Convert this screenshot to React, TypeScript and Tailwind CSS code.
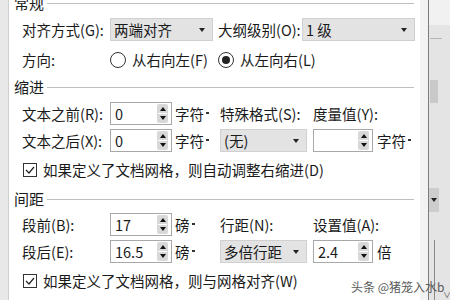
import React from "react";

const FONT = { fontFamily: '"Noto Sans CJK SC", "Noto Sans", sans-serif' };

function Heading({ text, className = "" }: { text: string; className?: string }) {
  return (
    <div className={`flex items-center h-[20px] pl-[5px] pr-[6px] ${className}`}>
      <span className="text-[15px] leading-[20px] text-[#1a1a1a]">{text}</span>
      <div className="flex-1 h-px bg-[#bdbdbd] ml-[3px]" />
    </div>
  );
}

function Label({ text, w }: { text: string; w: string }) {
  return <span className={`${w} shrink-0 whitespace-nowrap text-[14.5px] leading-[20px] text-[#1a1a1a]`}>{text}</span>;
}

function Caret() {
  return <span className="inline-block w-0 h-0 border-l-[3px] border-r-[3px] border-t-[4px] border-l-transparent border-r-transparent border-t-[#222]" />;
}

function Select({ value, w }: { value: string; w: string }) {
  return (
    <div className={`${w} h-[23px] shrink-0 flex items-center justify-between bg-[#e3e3e3] border border-[#d0d0d0] pl-[3px] pr-[7px]`}>
      <span className="text-[14.5px] leading-[20px] text-[#1a1a1a] whitespace-nowrap">{value}</span>
      <Caret />
    </div>
  );
}

function Spin({ value, w }: { value: string; w: string }) {
  return (
    <div className={`${w} h-[23px] shrink-0 flex items-center justify-between bg-white border border-[#a8a8a8] pl-[4px] pr-[3px]`}>
      <span className="text-[14.5px] leading-[20px] text-[#1a1a1a]">{value}</span>
      <div className="w-[11px] h-[19px] bg-[#d8d8d8] rounded-[2px] flex flex-col items-center justify-around py-[2px]">
        <span className="w-0 h-0 border-l-[3px] border-r-[3px] border-b-[4px] border-l-transparent border-r-transparent border-b-[#111]" />
        <span className="w-[9px] h-px bg-white" />
        <span className="w-0 h-0 border-l-[3px] border-r-[3px] border-t-[4px] border-l-transparent border-r-transparent border-t-[#111]" />
      </div>
    </div>
  );
}

function Unit({ text, w, dot = true }: { text: string; w: string; dot?: boolean }) {
  return (
    <span className={`${w} shrink-0 flex items-center text-[14.5px] leading-[20px] text-[#1a1a1a]`}>
      {text}
      {dot && <span className="ml-[2px] mt-[-2px] w-[3px] h-[2px] bg-[#333]" />}
    </span>
  );
}

function Check({ text, className = "" }: { text: string; className?: string }) {
  return (
    <div className={`flex items-center h-[20px] pl-[14px] ${className}`}>
      <span className="w-[14px] h-[14px] border border-[#333] bg-white flex items-center justify-center">
        <svg width="10" height="8" viewBox="0 0 10 8">
          <path d="M1 4 L4 7 L9 1" fill="none" stroke="#222" strokeWidth="1.2" />
        </svg>
      </span>
      <span className="ml-[6px] text-[14.5px] leading-[20px] text-[#1a1a1a] whitespace-nowrap">{text}</span>
    </div>
  );
}

function Radio({ on }: { on?: boolean }) {
  return (
    <span className="w-[16px] h-[16px] shrink-0 rounded-full border border-[#333] bg-white flex items-center justify-center">
      {on && <span className="w-[8px] h-[8px] rounded-full bg-[#222]" />}
    </span>
  );
}

export default function App() {
  return (
    <div className="relative w-[450px] h-[300px] flex overflow-hidden bg-white" style={FONT}>
      {/* background window, left */}
      <div className="w-[9px] shrink-0 bg-[#e8e8e8] border-r border-[#cfcfcf]" />

      {/* paragraph dialog */}
      <div className="w-[411px] shrink-0 bg-white">
        <Heading text="常规" className="mt-[-7px]" />

        <div className="flex items-center pl-[13px] mt-[5px]">
          <Label text="对齐方式(G):" w="w-[88px]" />
          <Select value="两端对齐" w="w-[103px]" />
          <span className="ml-[5px]" />
          <Label text="大纲级别(O):" w="w-[84px]" />
          <Select value="1 级" w="w-[113px]" />
        </div>

        <div className="flex items-center pl-[13px] mt-[9px] h-[20px]">
          <Label text="方向:" w="w-[88px]" />
          <div className="w-[108px] shrink-0 flex items-center">
            <Radio />
            <span className="ml-[6px] text-[14.5px] leading-[20px] text-[#1a1a1a] whitespace-nowrap">从右向左(F)</span>
          </div>
          <Radio on />
          <span className="ml-[6px] text-[14.5px] leading-[20px] text-[#1a1a1a] whitespace-nowrap">从左向右(L)</span>
        </div>

        <Heading text="缩进" className="mt-[7px]" />

        <div className="flex items-center pl-[13px] mt-[5px]">
          <Label text="文本之前(R):" w="w-[88px]" />
          <Spin value="0" w="w-[62px]" />
          <span className="ml-[3px]" />
          <Unit text="字符" w="w-[45px]" />
          <Label text="特殊格式(S):" w="w-[93px]" />
          <Label text="度量值(Y):" w="w-[80px]" />
        </div>

        <div className="flex items-center pl-[13px] mt-[4px]">
          <Label text="文本之后(X):" w="w-[88px]" />
          <Spin value="0" w="w-[62px]" />
          <span className="ml-[3px]" />
          <Unit text="字符" w="w-[45px]" />
          <Select value="(无)" w="w-[87px]" />
          <span className="ml-[6px]" />
          <Spin value="" w="w-[60px]" />
          <span className="ml-[4px]" />
          <Unit text="字符" w="w-[36px]" />
        </div>

        <Check text="如果定义了文档网格，则自动调整右缩进(D)" className="mt-[8px]" />

        <Heading text="间距" className="mt-[9px]" />

        <div className="flex items-center pl-[13px] mt-[4px]">
          <Label text="段前(B):" w="w-[88px]" />
          <Spin value="17" w="w-[62px]" />
          <span className="ml-[3px]" />
          <Unit text="磅" w="w-[45px]" />
          <Label text="行距(N):" w="w-[93px]" />
          <Label text="设置值(A):" w="w-[80px]" />
        </div>

        <div className="flex items-center pl-[13px] mt-[4px]">
          <Label text="段后(E):" w="w-[88px]" />
          <Spin value="16.5" w="w-[62px]" />
          <span className="ml-[3px]" />
          <Unit text="磅" w="w-[45px]" />
          <Select value="多倍行距" w="w-[87px]" />
          <span className="ml-[6px]" />
          <Spin value="2.4" w="w-[60px]" />
          <span className="ml-[4px]" />
          <Unit text="倍" w="w-[30px]" dot={false} />
        </div>

        <Check text="如果定义了文档网格，则与网格对齐(W)" className="mt-[8px]" />
      </div>

      {/* background window, right */}
      <div className="flex-1 flex bg-[#efefef]">
        <div className="w-[8px] shrink-0 bg-[#f2f2f2]" />
        <div className="w-px bg-[#7c7c7c]" />
        <div className="flex-1 flex flex-col bg-[#e4e4e4]">
          <div className="h-[25px] bg-[#f1f1f1]" />
          <div className="h-[13px]" />
          <div className="h-px w-[12px] ml-[1px] bg-[#b5b5b5]" />
          <div className="h-[41px]" />
          <div className="h-[23px] w-[8px] ml-[1px] bg-[#c9c9c9]" />
          <div className="h-[85px]" />
          <div className="h-[24px] w-[10px] flex items-center justify-center bg-[#cdcdcd]">
            <Caret />
          </div>
          <div className="h-[28px]" />
          <div className="flex-1 flex">
            <div className="w-[6px] border-r border-[#8a8a8a]" />
          </div>
        </div>
      </div>

      {/* watermark over the screenshot */}
      <span className="absolute left-[351px] top-[279px] text-[12px] leading-[16px] text-[#5a5a5a] whitespace-nowrap">头条 @猪笼入水b</span>
      <span className="absolute left-[443px] top-[291px] text-[8px] leading-[8px] text-[#555]">∨</span>
    </div>
  );
}
